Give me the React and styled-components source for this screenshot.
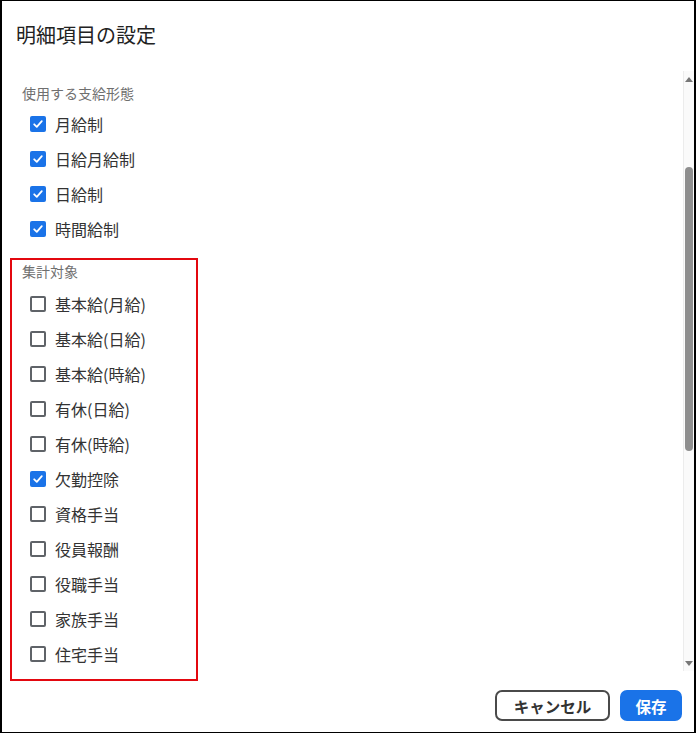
import React from "react";
import styled, { createGlobalStyle } from "styled-components";

const Global = createGlobalStyle`
  html, body { margin: 0; padding: 0; background: #fff; }
  body { font-family: "Noto Sans CJK JP", "Noto Sans", sans-serif; }
  * { box-sizing: border-box; }
`;

const Dialog = styled.div`
  width: 696px;
  height: 733px;
  border-top: 1px solid #000;
  border-bottom: 1px solid #000;
  border-left: 2px solid #000;
  border-right: 2px solid #000;
  display: flex;
  flex-direction: column;
  background: #fff;
  overflow: hidden;
`;

const Header = styled.div`
  height: 69px;
  padding: 21px 0 0 14px;
  flex: none;
`;

const Title = styled.h1`
  margin: 0;
  font-size: 20px;
  line-height: 26px;
  font-weight: 400;
  color: #222;
`;

const Body = styled.div`
  flex: 1;
  display: flex;
  min-height: 0;
`;

const Content = styled.div`
  flex: 1;
  padding: 13px 0 0 8px;
  display: flex;
  flex-direction: column;
`;

const Section = styled.section`
  width: 188px;
  padding: ${(p) => (p.$marked ? "1px 0 8px 10px" : "0 0 12px 12px")};
  border: ${(p) => (p.$marked ? "2px solid #e3080f" : "none")};
`;

const SectionLabel = styled.div`
  font-size: 14px;
  line-height: 20px;
  color: #6f6f6f;
  margin-bottom: ${(p) => p.$gap}px;
`;

const Item = styled.label`
  display: flex;
  align-items: center;
  height: 35px;
  padding-left: 8px;
  gap: 9px;
  font-size: 16px;
  color: #333;
`;

const Box = styled.span`
  width: 16px;
  height: 16px;
  border-radius: 2px;
  flex: none;
  display: flex;
  align-items: center;
  justify-content: center;
  background: ${(p) => (p.$checked ? "#1a73e8" : "#fff")};
  border: ${(p) => (p.$checked ? "none" : "2px solid #5f6368")};
`;

const Scrollbar = styled.div`
  width: 11px;
  height: 600px;
  margin-top: 1px;
  flex: none;
  display: flex;
  flex-direction: column;
  background: #fafafa;
  border-left: 1px solid #ececec;
`;

const Arrow = styled.div`
  height: 16px;
  display: flex;
  align-items: center;
  justify-content: center;
  flex: none;
`;

const Track = styled.div`
  flex: 1;
  padding: 80px 1px 0 1px;
`;

const Thumb = styled.div`
  height: 284px;
  border-radius: 4px;
  background: #8e8e8e;
`;

const Footer = styled.div`
  height: 47px;
  flex: none;
  display: flex;
  justify-content: flex-end;
  align-items: flex-start;
  gap: 10px;
  padding: 5px 12px 0 0;
`;

const Button = styled.button`
  height: 31px;
  width: ${(p) => (p.$primary ? "62px" : "115px")};
  padding: 0;
  border-radius: 7px;
  font-family: "Noto Sans CJK JP", sans-serif;
  font-size: 15.5px;
  font-weight: 700;
  cursor: pointer;
  border: 2px solid ${(p) => (p.$primary ? "#1a73e8" : "#4a4a4a")};
  background: ${(p) => (p.$primary ? "#1a73e8" : "#fff")};
  color: ${(p) => (p.$primary ? "#fff" : "#333")};
`;

const Check = ({ checked }) => (
  <Box $checked={checked}>
    {checked && (
      <svg width="12" height="12" viewBox="0 0 12 12">
        <polyline
          points="2.2,6.3 4.8,8.8 9.8,3.2"
          fill="none"
          stroke="#fff"
          strokeWidth="1.8"
          strokeLinecap="round"
          strokeLinejoin="round"
        />
      </svg>
    )}
  </Box>
);

const payTypes = ["月給制", "日給月給制", "日給制", "時間給制"];
const targets = [
  ["基本給(月給)", false],
  ["基本給(日給)", false],
  ["基本給(時給)", false],
  ["有休(日給)", false],
  ["有休(時給)", false],
  ["欠勤控除", true],
  ["資格手当", false],
  ["役員報酬", false],
  ["役職手当", false],
  ["家族手当", false],
  ["住宅手当", false],
];

export default function App() {
  return (
    <>
      <Global />
      <Dialog>
        <Header>
          <Title>明細項目の設定</Title>
        </Header>
        <Body>
          <Content>
            <Section>
              <SectionLabel $gap={3}>使用する支給形態</SectionLabel>
              {payTypes.map((t) => (
                <Item key={t}>
                  <Check checked />
                  {t}
                </Item>
              ))}
            </Section>
            <Section $marked>
              <SectionLabel $gap={5}>集計対象</SectionLabel>
              {targets.map(([t, c]) => (
                <Item key={t}>
                  <Check checked={c} />
                  {t}
                </Item>
              ))}
            </Section>
          </Content>
          <Scrollbar>
            <Arrow>
              <svg width="8" height="5" viewBox="0 0 8 5">
                <polygon points="0,5 8,5 4,0" fill="#777" />
              </svg>
            </Arrow>
            <Track>
              <Thumb />
            </Track>
            <Arrow>
              <svg width="8" height="5" viewBox="0 0 8 5">
                <polygon points="0,0 8,0 4,5" fill="#777" />
              </svg>
            </Arrow>
          </Scrollbar>
        </Body>
        <Footer>
          <Button>キャンセル</Button>
          <Button $primary>保存</Button>
        </Footer>
      </Dialog>
    </>
  );
}
